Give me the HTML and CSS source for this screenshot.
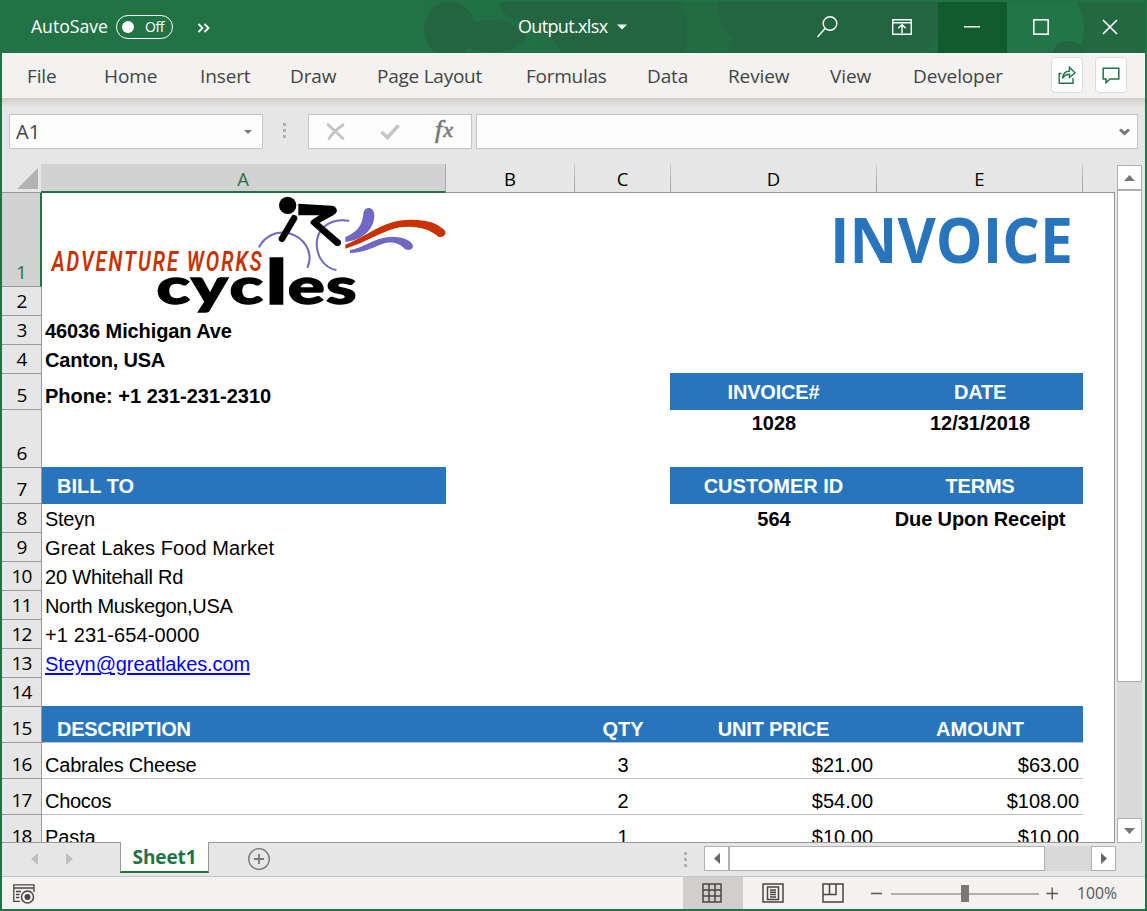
FILE: index.html
```
<!DOCTYPE html>
<html lang="en">
<head>
<meta charset="utf-8">
<title>Output.xlsx</title>
<link rel="stylesheet" href="styles.css">
</head>
<body>
<div class="window">
  <header class="titlebar">
    <svg class="pattern" width="1147" height="53" viewBox="0 0 1147 53">
      <defs><linearGradient id="fade"><stop offset="0" stop-color="#217346"/><stop offset=".45" stop-color="#226b43"/><stop offset="1" stop-color="#226942"/></linearGradient></defs>
      <rect x="380" y="2" width="765" height="51" fill="url(#fade)"/>
      <g fill="#236541"><ellipse cx="450" cy="29" rx="26" ry="27"/><ellipse cx="492" cy="36" rx="34" ry="16"/><path d="M500 2H680Q692 30 684 53H562Q550 30 520 22Q500 16 500 2Z"/><path d="M718 2H938V30Q930 47 918 53H726Q732 44 733 39Q716 24 718 2Z"/></g>
      <path d="M1007 2H1076Q1092 28 1076 53H1007Z" fill="#217547"/>
      <path d="M1052 53Q1056 41 1068 41Q1080 41 1085 53Z" fill="#236541"/>
    </svg>
    <span class="autosave">AutoSave</span>
    <span class="toggle"><i></i>Off</span>
    <svg class="more" width="14" height="10" viewBox="0 0 14 10"><path d="M1.5 1L5.5 5L1.5 9M7.5 1L11.5 5L7.5 9" fill="none" stroke="#fff" stroke-width="1.8"/></svg>
    <span class="filename">Output.xlsx</span>
    <svg class="caret" width="10" height="6" viewBox="0 0 10 6"><path d="M0 .5H10L5 5.5Z" fill="#fff"/></svg>
    <div class="winbtns">
      <span class="wb"><svg width="24" height="24" viewBox="0 0 24 24" fill="none" stroke="#fff" stroke-width="1.4"><circle cx="15" cy="8.5" r="6.8"/><path d="M10 13.5L2.5 22"/></svg></span>
      <span class="wb"><svg width="20" height="16" viewBox="0 0 20 16" fill="none" stroke="#fff" stroke-width="1.4"><path d="M.7.7H19.3V15.3H.7ZM.7 3.7H19.3M10 14V6M6.3 9.2L10 5.5L13.7 9.2"/></svg></span>
      <span class="wb min"><svg width="16" height="2"><rect width="16" height="1.5" fill="#fff"/></svg></span>
      <span class="wb"><svg width="16" height="16"><rect x=".8" y=".8" width="14.4" height="14.4" fill="none" stroke="#fff" stroke-width="1.6"/></svg></span>
      <span class="wb"><svg width="16" height="16"><path d="M1 1L15 15M15 1L1 15" stroke="#fff" stroke-width="1.7"/></svg></span>
    </div>
  </header>
  <nav class="ribbon">
    <span>File</span><span>Home</span><span>Insert</span><span>Draw</span><span class="tight">Page Layout</span><span class="tight">Formulas</span><span>Data</span><span>Review</span><span>View</span><span>Developer</span>
    <b class="rbtn"><svg width="18" height="18" viewBox="0 0 18 18" fill="none" stroke="#217346" stroke-width="1.4"><path d="M3.5 7.5H1.2V17.2H15V12"/><path d="M4.5 12.5Q5 5.5 11.5 5V1.3L17 6.7L11.5 11.5V8.2Q7 8 4.5 12.5Z"/></svg></b>
    <b class="rbtn"><svg width="18" height="18" viewBox="0 0 18 18" fill="none" stroke="#217346" stroke-width="1.5"><path d="M1.2 2.2H16.8V13H8L4 16.8V13H1.2Z"/></svg></b>
  </nav>
  <div class="formulabar">
    <div class="box namebox"><span>A1</span><svg width="8" height="4"><path d="M0 0H8L4 4Z" fill="#777"/></svg></div>
    <div class="dots"><i></i><i></i><i></i></div>
    <div class="box fx">
      <svg width="18" height="17" viewBox="0 0 18 17"><path d="M1 1.5L16 15.5M16 2Q8 7 2 15.5" fill="none" stroke="#c3c3c3" stroke-width="2.8" stroke-linecap="round"/></svg>
      <svg width="20" height="16" viewBox="0 0 20 16"><path d="M1.5 8L7.5 13.5L18.5 1.5" fill="none" stroke="#c6c6c6" stroke-width="3.6"/></svg>
      <span class="fxt"><span class="f">f</span><span class="x">x</span></span>
    </div>
    <div class="box formula"><svg width="11" height="8" viewBox="0 0 11 8"><path d="M1 1.5L5.5 5.5L10 1.5" fill="none" stroke="#777" stroke-width="3"/></svg></div>
  </div>
  <main class="work">
    <div class="sheet">
      <div class="cols"><span class="corner"><svg width="21" height="21"><path d="M21 0V21H0Z" fill="#b2b2b2"/></svg></span><span class="sel">A</span><span>B</span><span>C</span><span>D</span><span>E</span></div>
      <div class="row r94"><b class="rn sel">1</b>
        <div class="logo">
          <svg width="406" height="126" viewBox="0 0 1218 378">
            <g transform="translate(594 -9)">
              <g fill="none" stroke="#6f69c3" stroke-width="6" stroke-linecap="round"><path d="M58 170C76 137 112 121 147 130C194 143 221 187 203 231"/><path d="M325 92C277 85 239 108 231 150C225 194 251 232 287 240"/></g>
              <path d="M316 141C350 128 368 105 370 72C371 47 404 47 403 78C401 119 370 149 316 156Z" fill="#6f69c3"/>
              <path d="M330 180C370 174 402 142 456 140C490 141 516 151 519 168C519 181 501 184 492 175C476 157 449 154 427 162C393 175 370 188 330 189Z" fill="#6f69c3"/>
              <path d="M316 164C385 137 430 89 510 89C555 88 593 98 614 121C622 134 608 145 595 140C570 116 524 105 480 112C430 121 377 158 316 176Z" fill="#c83200"/>
              <circle cx="143" cy="46" r="26"/>
              <path d="M162 85L126 146" stroke="#000" stroke-width="20" stroke-linecap="round"/>
              <path d="M175 41L276 47Q289 49 291 62Q290 70 281 75L239 98L302 152Q307 165 293 169L287 167L214 103Q207 96 217 89L238 76L175 76Z"/>
            </g>
            <text class="adv" x="29" y="233" textLength="636" lengthAdjust="spacingAndGlyphs">ADVENTURE WORKS</text>
            <g transform="scale(1.42 1)"><text class="cyc" y="333" x="242 315 396 472 519 600">cyc<tspan class="ell">l</tspan>es</text></g>
          </svg>
        </div>
        <svg class="invoice" width="240" height="70"><text x="-2" y="54" textLength="243" lengthAdjust="spacingAndGlyphs">INVOICE</text></svg>
      </div>
      <div class="row"><b class="rn">2</b></div>
      <div class="row bold"><b class="rn">3</b><span class="a s1">46036 Michigan Ave</span></div>
      <div class="row bold"><b class="rn">4</b><span class="a s2">Canton, USA</span></div>
      <div class="row r36 bold"><b class="rn">5</b><span class="a">Phone: +1 231-231-2310</span><span class="d hd s2">INVOICE#</span><span class="e hd s2">DATE</span></div>
      <div class="row r58 bold"><b class="rn">6</b><span class="d up">1028</span><span class="e up">12/31/2018</span></div>
      <div class="row r36 bold"><b class="rn">7</b><span class="a hd ind">BILL TO</span><span class="d hd">CUSTOMER ID</span><span class="e hd s2">TERMS</span></div>
      <div class="row"><b class="rn">8</b><span class="a s3">Steyn</span><span class="d bold">564</span><span class="e bold s1">Due Upon Receipt</span></div>
      <div class="row"><b class="rn">9</b><span class="a">Great Lakes Food Market</span></div>
      <div class="row"><b class="rn">10</b><span class="a s2">20 Whitehall Rd</span></div>
      <div class="row"><b class="rn">11</b><span class="a s4">North Muskegon,USA</span></div>
      <div class="row"><b class="rn">12</b><span class="a">+1 231-654-0000</span></div>
      <div class="row"><b class="rn">13</b><span class="a s1"><u>Steyn@greatlakes.com</u></span></div>
      <div class="row"><b class="rn">14</b></div>
      <div class="row r36 bold"><b class="rn">15</b><span class="a hd low ind s3">DESCRIPTION</span><span class="b hd low"></span><span class="c hd low">QTY</span><span class="d hd low s2">UNIT PRICE</span><span class="e hd low">AMOUNT</span></div>
      <div class="row r36 line"><b class="rn">16</b><span class="a s2">Cabrales Cheese</span><span class="b"></span><span class="c">3</span><span class="d num">$21.00</span><span class="e num">$63.00</span></div>
      <div class="row r36 line"><b class="rn">17</b><span class="a s3">Chocos</span><span class="b"></span><span class="c">2</span><span class="d num">$54.00</span><span class="e num">$108.00</span></div>
      <div class="row r36"><b class="rn">18</b><span class="a s1">Pasta</span><span class="c">1</span><span class="d num">$10.00</span><span class="e num">$10.00</span></div>
    </div>
    <div class="vscroll"><span class="sb"><svg width="11" height="6"><path d="M0 6L5.5 0L11 6Z" fill="#777"/></svg></span><span class="thumb"></span><span class="track"></span><span class="sb"><svg width="11" height="6"><path d="M0 0L5.5 6L11 0Z" fill="#777"/></svg></span></div>
  </main>
  <div class="tabs">
    <svg class="nav1" width="7" height="12"><path d="M7 0V12L0 6Z" fill="#bdbdbd"/></svg>
    <svg class="nav2" width="7" height="12"><path d="M0 0V12L7 6Z" fill="#bdbdbd"/></svg>
    <span class="tab">Sheet1</span>
    <svg class="plus" width="22" height="22" fill="none" stroke="#777"><circle cx="11" cy="11" r="10.3" stroke-width="1.3"/><path d="M6 11H16M11 6V16" stroke-width="1.8"/></svg>
    <div class="dots small"><i></i><i></i><i></i></div>
    <div class="hscroll"><span class="sb"><svg width="6" height="11"><path d="M6 0V11L0 5.5Z" fill="#666"/></svg></span><span class="thumb"></span><span class="track"></span><span class="sb"><svg width="6" height="11"><path d="M0 0V11L6 5.5Z" fill="#666"/></svg></span></div>
  </div>
  <footer class="status">
    <svg class="macro" width="22" height="20" viewBox="0 0 22 20" fill="none" stroke="#484644" stroke-width="1.3"><path d="M7 17.4H.8V.8H21V8M.8 4H21M3 7.5H8M3 10.5H6.5M3 13.5H6.5"/><circle cx="14.5" cy="13" r="6" stroke-width="1.5"/><circle cx="14.5" cy="13" r="3" fill="#484644" stroke="none"/></svg>
    <span class="view on"><svg width="20" height="20" fill="none" stroke="#484644" stroke-width="1.5"><path d="M1 1H19V19H1ZM1 7H19M1 13H19M7 1V19M13 1V19"/></svg></span>
    <span class="view"><svg width="22" height="20" fill="none" stroke="#484644" stroke-width="1.5"><path d="M1 1H21V19H1ZM5.5 4H16.5V16.5H5.5ZM8 7H14M8 9.3H14M8 11.6H14M8 13.9H14"/></svg></span>
    <span class="view"><svg width="22" height="20" fill="none" stroke="#484644" stroke-width="1.5"><path d="M1 1H21V19H1ZM1 11.5H14V1M7.5 1V11.5"/></svg></span>
    <svg class="zoom" width="190" height="20" viewBox="0 0 190 20"><path d="M21 11H169" stroke="#b0aeac" stroke-width="2"/><path d="M1 10.5H12M176.5 10.5H188M182.2 4.5V16.5" stroke="#555" stroke-width="1.4"/><rect x="91" y="2" width="8" height="17" fill="#7a7876"/></svg>
    <span class="pct">100%</span>
  </footer>
</div>
</body>
</html>
```
FILE: styles.css
```
* { box-sizing: border-box; }
body { margin: 0; font-family: "Open Sans", "Noto Sans", sans-serif; }
svg { display: block; flex: none; }
.window { width: 1147px; height: 911px; overflow: hidden; display: flex; flex-direction: column; background: #e6e6e6; border: solid #217346; border-width: 0 2px 2px; }

.titlebar { position: relative; height: 53px; flex: none; margin: 0 -2px; background: #217346; color: #fff; display: flex; align-items: center; font-size: 18px; }
.titlebar > * { position: relative; flex: none; }
.titlebar > .pattern { position: absolute; left: 0; top: 0; }
.autosave { margin-left: 31px; width: 85px; padding-bottom: 1px; font-size: 17.6px; }
.toggle { width: 57px; height: 24px; border: 1px solid #fff; border-radius: 12px; display: flex; align-items: center; font-size: 14px; letter-spacing: -.4px; padding: 0 0 1px 5px; }
.toggle i { width: 12px; height: 12px; border-radius: 50%; background: #fff; margin: 1px 11px 0 0; }
.more { margin: 2px 0 0 24px; }
.filename { margin-left: 307px; width: 99px; padding-bottom: 1px; letter-spacing: -.65px; }
.winbtns { display: flex; height: 51px; margin: 2px 0 0 auto; }
.wb { width: 69px; display: flex; align-items: center; justify-content: center; padding: 0 2px 2px 0; }
.wb:first-child { width: 75px; padding-left: 6px; }
.wb:nth-child(2) { width: 76px; padding-left: 6px; }
.wb.min { background: #105c2f; }
.wb:last-child { width: 71px; padding-right: 4px; }

.ribbon { height: 45px; flex: none; background: #f3f2f1; color: #444; display: grid; grid-template-columns: 77px 96px 90px 87px 149px 121px 81px 102px 83px 138px 32px 32px; padding-left: 25px; align-items: center; font-size: 19px; white-space: nowrap; letter-spacing: -.12px; }
.tight { letter-spacing: -.25px; }
.rbtn { width: 32px; height: 36px; background: #fff; border: 1px solid #dedcda; border-radius: 4px; display: flex; align-items: center; justify-content: center; margin-top: -1px; }
.rbtn + .rbtn { margin-left: 12px; }

.formulabar { height: 66px; flex: none; padding: 16px 7px 0; display: flex; background: linear-gradient(#cfcdcb, #e6e6e6 9px); }
.box { height: 35px; background: #fdfdfd; border: 1px solid #c3c3c3; display: flex; align-items: center; }
.namebox { width: 254px; justify-content: space-between; padding: 0 10px 0 6px; font-size: 20px; color: #444; }
.dots { width: 45px; display: flex; flex-direction: column; align-items: center; gap: 3px; padding: 9px 2px 0 0; }
.dots i { width: 3px; height: 3px; background: #b0b0b0; }
.fx { width: 164px; padding-left: 18px; }
.fx svg + svg { margin-left: 35px; }
.fxt { margin: -4px 0 0 35px; font: italic 26px/30px "Liberation Serif", serif; -webkit-text-stroke: .6px #777; color: #777; display: flex; }
.fxt .x { font-size: 22px; margin-left: 1px; }
.formula { flex: 1; margin-left: 4px; justify-content: flex-end; padding-right: 7px; }

.work { height: 679px; flex: none; display: flex; }
.sheet { width: 1113px; height: 679px; overflow: hidden; background: #fff; border-bottom: 1px solid #999; font: 20px/27px "Liberation Sans", Arial, sans-serif; color: #000; letter-spacing: .1px; }
.cols, .row { display: grid; grid-template-columns: 40px 404px 129px 96px 206px 206px; }
.cols { height: 29px; background: #e6e6e6; border-bottom: 1px solid #999; font: 18.5px/29px "Open Sans", sans-serif; text-align: center; letter-spacing: 0; }
.cols span { height: 28px; border-right: 1px solid; border-image: linear-gradient(#cfcfcf, #999) 1; }
.cols .sel { background: #d2d2d2; color: #217346; height: 29px; border-bottom: 2px solid #217346; border-image: none; border-right-color: #aaa; margin-left: -1px; }
.corner { padding: 4px 0 0 15px; }
.row { height: 29px; align-items: end; white-space: nowrap; border-right: 1px solid #999; }
.r36 { height: 36px; }
.r58 { height: 58px; }
.r94 { height: 94px; }
.rn { grid-column: 1; height: 100%; background: #e6e6e6; border: solid #999; border-width: 0 1px 1px 0; display: flex; align-items: flex-end; justify-content: center; font: 19px/28px "Open Sans", sans-serif; letter-spacing: -.9px; }
.rn.sel { background: #d2d2d2; color: #217346; border-right: 2px solid #217346; }
.rn, .a, .b, .c, .d, .e, .logo, .invoice { grid-row: 1; }
.a { grid-column: 2; padding-left: 3px; }
.b { grid-column: 3; align-self: stretch; }
.c { grid-column: 4; text-align: center; }
.d { grid-column: 5; text-align: center; }
.e { grid-column: 6; text-align: center; }
.num { text-align: right; padding-right: 4px; letter-spacing: 0; }
.bold { font-weight: bold; letter-spacing: 0; }
.s1 { letter-spacing: -.1px; }
.s2 { letter-spacing: -.2px; }
.s3 { letter-spacing: -.28px; }
.s4 { letter-spacing: -.33px; }
.up { align-self: start; line-height: 27px; }
.hd { background: #2975bd; color: #fff; height: 37px; line-height: 38px; margin-top: -1px; }
.hd.d { margin-left: -1px; }
.hd.low { line-height: 46px; border-bottom: 1px solid #bfbfbf; }
.ind { padding-left: 15px; }
.line > span { height: 36px; line-height: 45px; border-bottom: 1px solid #bfbfbf; }
u { color: #00f; text-underline-offset: 2px; }
.logo { grid-column: 2; align-self: start; height: 94px; }
.logo svg { position: relative; z-index: 2; overflow: visible; }
.adv { font: italic 600 82px Roboto, sans-serif; letter-spacing: 8px; fill: #c83200; }
.cyc { font: 900 146px Lato, sans-serif; stroke: #000; stroke-width: 4px; }
.ell { font-size: 182px; }
.invoice { grid-column: 5 / 7; align-self: start; margin: 16px 0 0 161px; overflow: visible; }
.invoice text { font: bold 62px "Open Sans", sans-serif; fill: #2975bd; }

.vscroll { width: 25px; margin: 1px 0 0 2px; display: flex; flex-direction: column; }
.sb { width: 25px; height: 25px; flex: none; background: #fff; border: 1px solid #b0b0b0; display: flex; align-items: center; justify-content: center; }
.thumb { background: #fff; border: 1px solid #b0b0b0; }
.track { background: #d9d9d9; flex: 1; }
.vscroll .thumb { height: 492px; }

.tabs { height: 34px; flex: none; display: flex; border-bottom: 1px solid #c6c6c6; }
.nav1 { margin: 10px 0 0 29px; }
.nav2 { margin: 10px 0 0 28px; }
.tab { margin: -1px 0 0 47px; width: 89px; height: 31px; background: #fff; border: solid #999; border-width: 0 1px; border-bottom: 2px solid #217346; color: #217346; font-weight: bold; font-size: 19px; line-height: 30px; text-align: center; letter-spacing: -.1px; position: relative; }
.plus { margin: 5px 0 0 39px; }
.small { margin-left: 391px; width: 48px; padding-right: 0; }
.hscroll { display: flex; height: 25px; width: 412px; margin: 3px 0 0 -5px; }
.hscroll .thumb { width: 316px; }

.status { height: 32px; flex: none; background: #f3f2f1; display: flex; align-items: center; }
.macro { margin: 2px 0 0 11px; }
.view { width: 60px; height: 32px; display: flex; align-items: center; justify-content: center; padding: 0 0 1px 0; }
.on { margin-left: 648px; background: #d0cfce; padding-right: 2px; }
.zoom { margin-left: 7px; }
.pct { margin-left: 17px; font-size: 15.8px; color: #555; }
```
